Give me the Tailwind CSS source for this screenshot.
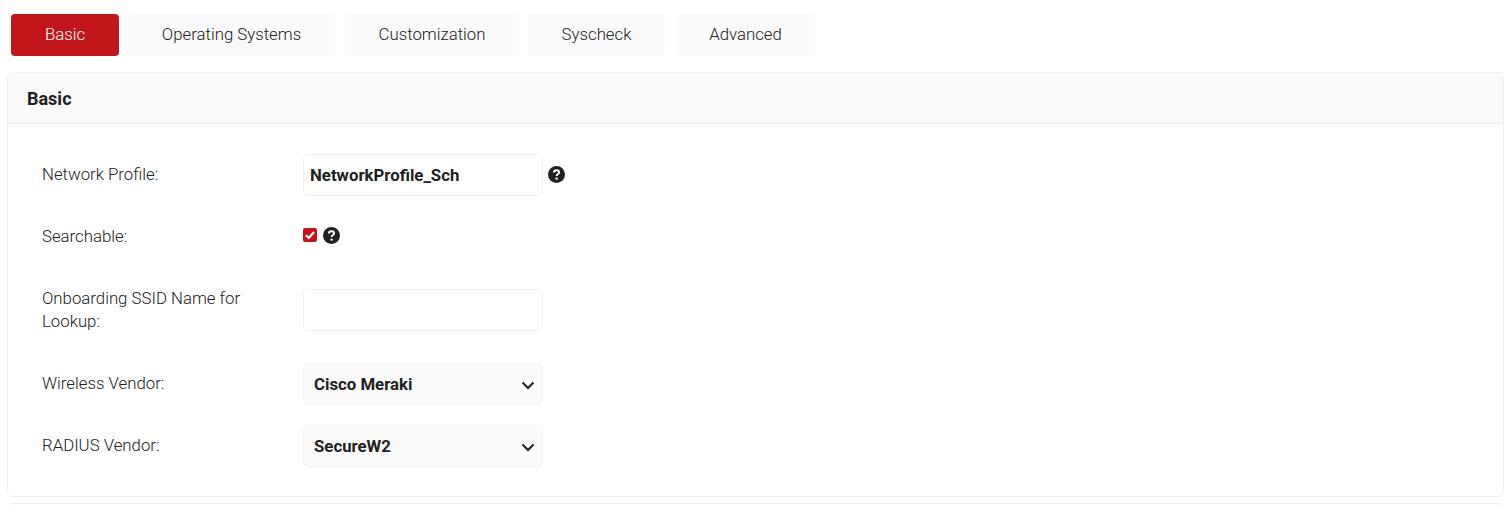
<!DOCTYPE html>
<html>
<head>
<meta charset="utf-8">
<script src="https://cdn.jsdelivr.net/npm/@tailwindcss/browser@4"></script>
</head>
<body class="bg-white font-['Roboto',sans-serif] text-[#212121] overflow-hidden h-[506px]">
<nav class="flex pl-[11px] pt-[14px] h-[56px] text-[16.8px] font-light">
  <a class="w-[108px] h-[42px] flex items-center justify-center rounded bg-[#c3161c] text-white">Basic</a>
  <a class="ml-[9px] w-[207px] h-[42px] flex items-center justify-center rounded bg-[#fafafa]">Operating Systems</a>
  <a class="ml-[10px] w-[174px] h-[42px] flex items-center justify-center rounded bg-[#fafafa]">Customization</a>
  <a class="ml-[9px] w-[137px] h-[42px] flex items-center justify-center rounded bg-[#fafafa]">Syscheck</a>
  <a class="ml-[11px] w-[139px] h-[42px] flex items-center justify-center rounded bg-[#fafafa]">Advanced</a>
</nav>
<section class="mt-[16px] mx-[7px] h-[425px] border border-[#efefef] rounded-md">
  <h2 class="h-[51px] pt-[1px] px-[19px] flex items-center bg-[#fafafa] border-b border-[#efefef] rounded-t-md text-[18px] font-bold">Basic</h2>
  <div class="pl-[34px] pt-[30px] text-[16.8px] font-light">
    <div class="flex items-center h-[42px]">
      <label class="w-[261px]">Network Profile:</label>
      <input value="NetworkProfile_Sch" class="w-[240px] h-[42px] px-[6px] border border-[#f0f0f0] rounded-md font-bold text-[16.8px] bg-white outline-none">
      <svg class="ml-[5px] w-[17px] h-[17px] -translate-y-px" viewBox="0 0 17 17"><circle cx="8.5" cy="8.5" r="8.5" fill="#212121"/><path d="M5.9 6.5C5.9 5 7 4.2 8.5 4.2S11.1 5 11.1 6.4C11.1 8.1 8.6 8.1 8.6 10" fill="none" stroke="#fff" stroke-width="1.9"/><circle cx="8.6" cy="12.6" r="1.2" fill="#fff"/></svg>
    </div>
    <div class="flex items-center h-[24px] mt-[28px]">
      <label class="w-[261px] pt-[1px]">Searchable:</label>
      <span class="w-[14px] h-[14px] rounded-[2px] bg-[#c3161c] flex items-center justify-center -translate-y-px">
        <svg class="w-[12px] h-[12px]" viewBox="0 0 12 12"><path d="M2 6.2 4.8 9 10 3" fill="none" stroke="#fff" stroke-width="2.2"/></svg>
      </span>
      <svg class="ml-[6px] w-[17px] h-[17px] -translate-y-px" viewBox="0 0 17 17"><circle cx="8.5" cy="8.5" r="8.5" fill="#212121"/><path d="M5.9 6.5C5.9 5 7 4.2 8.5 4.2S11.1 5 11.1 6.4C11.1 8.1 8.6 8.1 8.6 10" fill="none" stroke="#fff" stroke-width="1.9"/><circle cx="8.6" cy="12.6" r="1.2" fill="#fff"/></svg>
    </div>
    <div class="flex items-center h-[48px] mt-[38px]">
      <label class="w-[261px] pr-[50px] leading-[23px]">Onboarding SSID Name for Lookup:</label>
      <input class="w-[240px] h-[42px] border border-[#f0f0f0] rounded-md bg-white outline-none">
    </div>
    <div class="flex items-center h-[42px] mt-[29px]">
      <label class="w-[261px]">Wireless Vendor:</label>
      <div class="w-[240px] h-[42px] pl-[10px] pr-[6px] pt-[1px] flex items-center justify-between border border-[#f3f3f3] rounded-md bg-[#fafafa] font-bold">
        <span>Cisco Meraki</span>
        <svg class="w-[16px] h-[16px]" viewBox="0 0 16 16"><path d="M2.5 5.5 8 11l5.5-5.5" fill="none" stroke="#212121" stroke-width="2"/></svg>
      </div>
    </div>
    <div class="flex items-center h-[42px] mt-[20px]">
      <label class="w-[261px]">RADIUS Vendor:</label>
      <div class="w-[240px] h-[42px] pl-[10px] pr-[6px] pt-[1px] flex items-center justify-between border border-[#f3f3f3] rounded-md bg-[#fafafa] font-bold">
        <span>SecureW2</span>
        <svg class="w-[16px] h-[16px]" viewBox="0 0 16 16"><path d="M2.5 5.5 8 11l5.5-5.5" fill="none" stroke="#212121" stroke-width="2"/></svg>
      </div>
    </div>
  </div>
</section>
<section class="mt-[6px] mx-[7px] h-[20px] border border-[#efefef] rounded-md"></section>
</body>
</html>
